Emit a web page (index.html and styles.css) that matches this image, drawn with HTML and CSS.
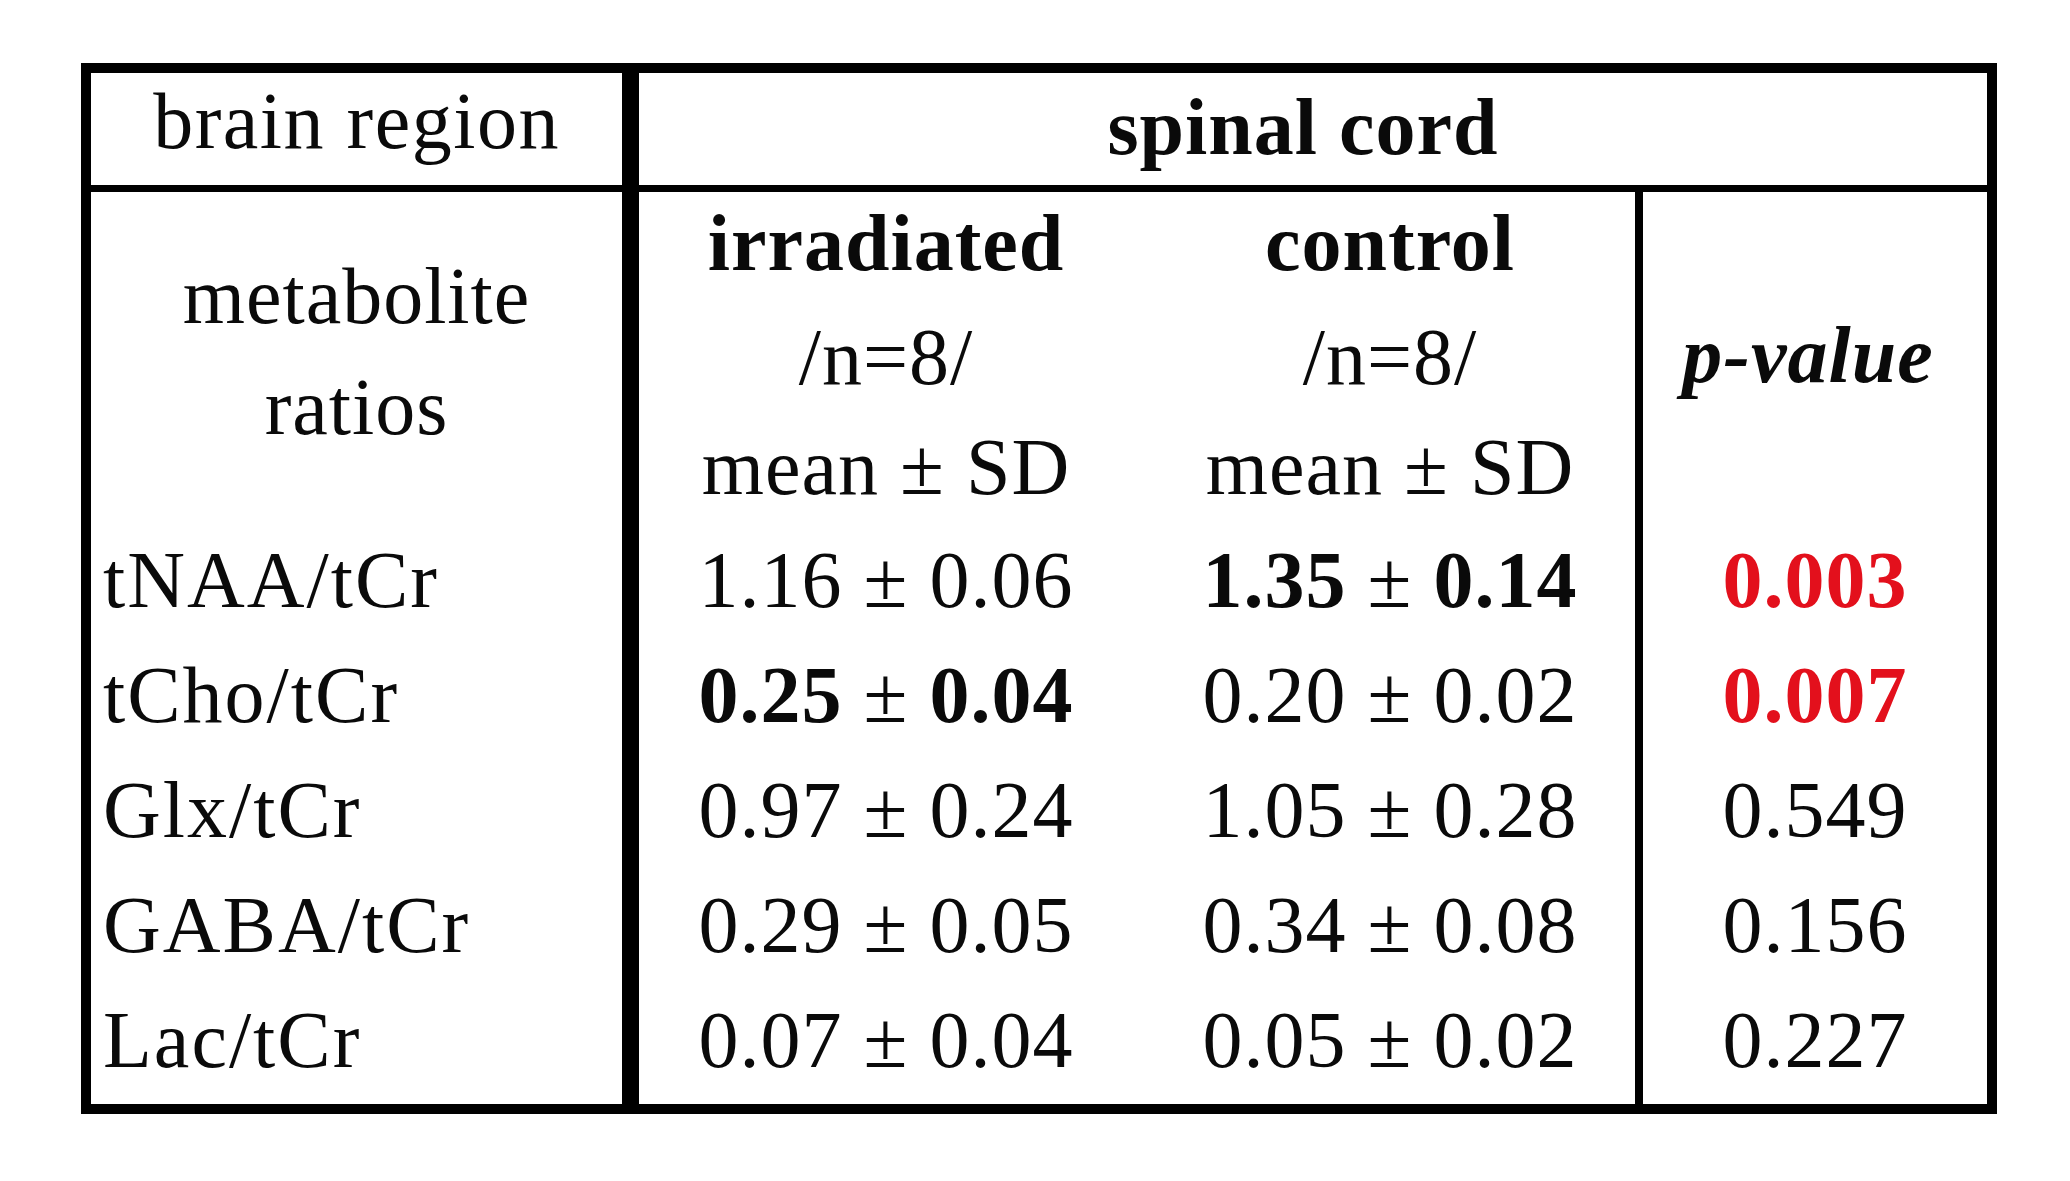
FILE: index.html
```html
<!DOCTYPE html>
<html lang="en">
<head>
<meta charset="utf-8">
<title>Metabolite ratios – spinal cord</title>
<link rel="stylesheet" href="styles.css">
</head>
<body>
<div class="sheet">
  <div class="grid">
    <div class="cell colA head head-left">brain region</div>
    <div class="cell span head bold">spinal cord</div>

    <div class="cell colA sub center-v lift"><div class="stack"><div>metabolite</div><div>ratios</div></div></div>
    <div class="cell colB sub"><div class="subline bold">irradiated</div><div class="subline">/n=8/</div><div class="subline">mean ± SD</div></div>
    <div class="cell colC sub"><div class="subline bold">control</div><div class="subline">/n=8/</div><div class="subline">mean ± SD</div></div>
    <div class="cell colD sub center-v"><span class="pv">p-value</span></div>

    <div class="cell colA label">tNAA/tCr</div>
    <div class="cell colB">1.16 ± 0.06</div>
    <div class="cell colC"><b>1.35</b> ± <b>0.14</b></div>
    <div class="cell colD"><b class="sig">0.003</b></div>

    <div class="cell colA label">tCho/tCr</div>
    <div class="cell colB"><b>0.25</b> ± <b>0.04</b></div>
    <div class="cell colC">0.20 ± 0.02</div>
    <div class="cell colD"><b class="sig">0.007</b></div>

    <div class="cell colA label">Glx/tCr</div>
    <div class="cell colB">0.97 ± 0.24</div>
    <div class="cell colC">1.05 ± 0.28</div>
    <div class="cell colD">0.549</div>

    <div class="cell colA label">GABA/tCr</div>
    <div class="cell colB">0.29 ± 0.05</div>
    <div class="cell colC">0.34 ± 0.08</div>
    <div class="cell colD">0.156</div>

    <div class="cell colA label">Lac/tCr</div>
    <div class="cell colB">0.07 ± 0.04</div>
    <div class="cell colC">0.05 ± 0.02</div>
    <div class="cell colD">0.227</div>
  </div>
</div>
</body>
</html>
```

FILE: styles.css
```css
html, body {
  margin: 0;
  padding: 0;
  background: #ffffff;
}

body {
  font-family: "Liberation Serif", "Times New Roman", serif;
  font-size: 80px;
  letter-spacing: 1px;
  color: #0a0a0a;
}

.sheet {
  padding: 63px 0 0 81px;
}

.grid {
  display: grid;
  width: 1916px;
  box-sizing: border-box;
  border: 10px solid #000;
  grid-template-columns: 548px 494px 502px 352px;
  grid-template-rows: 119px 331px 115px 115px 115px 115px 121px;
}

.cell {
  box-sizing: border-box;
  text-align: center;
  line-height: 115px;
  white-space: nowrap;
}

.colA {
  border-right: 17px solid #000;
}

.colC {
  padding-left: 12px;
}

.colD {
  border-left: 8px solid #000;
}

.head {
  border-bottom: 7px solid #000;
  line-height: 96px;
  padding-top: 6px;
  padding-bottom: 10px;
}

.head-left {
  padding-top: 0;
  padding-bottom: 16px;
  letter-spacing: 1.5px;
}

.span {
  grid-column: 2 / 5;
  padding-left: 10px;
  padding-right: 30px;
}

.sub {
  line-height: 110px;
}

.subline {
  line-height: 110px;
}

.subline:first-child {
  margin-top: -4px;
  margin-bottom: 4px;
}

.center-v {
  display: flex;
  align-items: center;
  justify-content: center;
}

.lift {
  padding-bottom: 12px;
}

.stack {
  line-height: 111px;
}

.label {
  text-align: left;
  padding-left: 12px;
  letter-spacing: 2px;
}

.bold,
b {
  font-weight: bold;
}

.pv {
  font-weight: bold;
  font-style: italic;
  padding-right: 14px;
  padding-bottom: 4px;
  line-height: 111px;
}

.sig {
  color: #e3101c;
}
```
